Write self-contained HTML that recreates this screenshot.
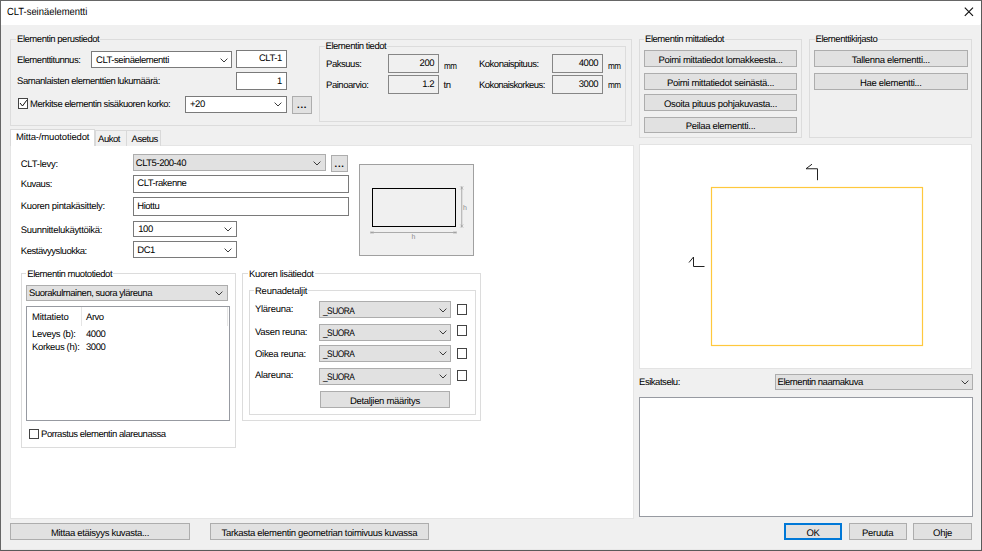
<!DOCTYPE html>
<html><head><meta charset="utf-8"><title>CLT-seinäelementti</title>
<style>
html,body{margin:0;padding:0;}
body{width:982px;height:551px;overflow:hidden;background:#f0f0f0;position:relative;font-family:"Liberation Sans",sans-serif;font-size:9.5px;letter-spacing:-0.46px;text-rendering:geometricPrecision;color:#000;}
.a{position:absolute;box-sizing:border-box;white-space:nowrap;}
.t{position:absolute;white-space:nowrap;line-height:10px;height:10px;transform:translateY(0.6px);}
.grp{position:absolute;box-sizing:border-box;border:1px solid #dcdcdc;}
.gl{position:absolute;white-space:nowrap;background:#f0f0f0;line-height:10px;height:10px;padding:0 1px;transform:translateY(0.6px);}
.w .gl{background:#fff;}
.btn{position:absolute;box-sizing:border-box;border:1px solid #adadad;background:#e1e1e1;text-align:center;white-space:nowrap;}
.ed{position:absolute;box-sizing:border-box;border:1px solid #7a7a7a;background:#fff;white-space:nowrap;}
.ro{background:#f0f0f0;border-color:#868686;}
.cb{position:absolute;box-sizing:border-box;border:1px solid #7a7a7a;background:#fff;white-space:nowrap;}
.cbg{border-color:#adadad;background:#e1e1e1;}
.cb svg,.cbg svg{position:absolute;right:3.5px;top:50%;margin-top:-2px;}
.chk{position:absolute;box-sizing:border-box;border:1px solid #444;background:#fff;width:10.5px;height:10.5px;}
.in{position:absolute;left:4px;top:calc(50% + var(--o,0px));margin-top:-5px;line-height:10px;transform:translateY(0.6px);}
.inr{position:absolute;right:3.7px;top:calc(50% + var(--o,0px));margin-top:-5px;line-height:10px;transform:translateY(0.6px);}
.btn span{position:absolute;left:0;right:0;top:calc(50% + var(--o,1.4px));margin-top:-5px;line-height:10px;transform:translateY(0.6px);letter-spacing:-0.31px;}
.mm{letter-spacing:-0.7px;font-size:9.3px;display:inline-block;transform:scaleX(0.87);transform-origin:0 50%;}
.su{letter-spacing:-0.6px;transform:translateY(1.6px) scaleX(0.88) !important;transform-origin:0 50%;}
.btn span.dots{letter-spacing:0.7px;padding-left:0.7px;font-weight:bold;}
</style></head><body>
<!-- window frame -->
<div class="a" style="left:0;top:0;width:982px;height:551px;border:1px solid #666;border-right-color:#5a5a5a;border-bottom-color:#5a5a5a;"></div>
<div class="a" style="left:1px;top:1px;width:980px;height:23.5px;background:#fff;"></div>
<div class="a" style="left:980px;top:24px;width:1px;height:526px;background:#f4f4f4;"></div>
<div class="a" style="left:1px;top:549px;width:980px;height:1px;background:#e8e8e8;"></div>
<div class="t" style="left:7.4px;top:6.8px;font-size:10.4px;letter-spacing:0;line-height:12px;height:12px;transform:scaleX(0.905);transform-origin:0 50%;">CLT-seinäelementti</div>
<svg class="a" style="left:964px;top:7px" width="10" height="10" viewBox="0 0 10 10"><path d="M0.800 0.600 L9 8.800 M9 0.600 L0.800 8.800" stroke="#111" stroke-width="1.15" fill="none"/></svg>

<!-- Group: Elementin perustiedot -->
<div class="grp" style="left:10.300px;top:38.800px;width:621.500px;height:87px;"></div>
<div class="gl" style="left:16px;top:34px;">Elementin perustiedot</div>
<div class="t" style="left:17px;top:54.500px;">Elementtitunnus:</div>
<div class="cb" style="left:91px;top:51px;width:141px;height:17px;"><span class="in">CLT-seinäelementti</span><svg width="8" height="5" viewBox="0 0 8 5"><path d="M0.600 0.600 L4 4 L7.400 0.600" stroke="#3c3c3c" fill="none" stroke-width="1"/></svg></div>
<div class="ed" style="left:235.500px;top:49.750px;width:51px;height:18px;"><span class="inr" style="--o:-0.5px">CLT-1</span></div>
<div class="t" style="left:17px;top:76px;">Samanlaisten elementtien lukumäärä:</div>
<div class="ed" style="left:235.500px;top:72.250px;width:51px;height:18px;"><span class="inr" style="--o:-0.7px">1</span></div>
<div class="chk" style="left:17.500px;top:98px;"><svg style="position:absolute;left:0;top:0" width="9" height="9" viewBox="0 0 9 9"><path d="M1 4 L3.500 7 L7.750 1.200" stroke="#111" fill="none" stroke-width="1"/></svg></div>
<div class="t" style="left:30px;top:98.750px;">Merkitse elementin sisäkuoren korko:</div>
<div class="cb" style="left:185px;top:95.750px;width:101.500px;height:17px;"><span class="in" style="--o:-0.5px">+20</span><svg width="8" height="5" viewBox="0 0 8 5"><path d="M0.600 0.600 L4 4 L7.400 0.600" stroke="#3c3c3c" fill="none" stroke-width="1"/></svg></div>
<div class="btn" style="left:291.750px;top:96px;width:20px;height:17.500px;"><span class="dots" style="--o:0.6px">...</span></div>

<!-- Group: Elementin tiedot -->
<div class="grp" style="left:319px;top:46px;width:306.500px;height:76.250px;"></div>
<div class="gl" style="left:324.500px;top:41.200px;">Elementin tiedot</div>
<div class="t" style="left:326px;top:59px;">Paksuus:</div>
<div class="ed ro" style="left:387.750px;top:54.250px;width:51px;height:18.500px;"><span class="inr" style="--o:-1px">200</span></div>
<div class="t" style="left:443.500px;top:60.400px;"><span class="mm">mm</span></div>
<div class="t" style="left:326px;top:79.750px;">Painoarvio:</div>
<div class="ed ro" style="left:387.750px;top:75.250px;width:51px;height:18.250px;"><span class="inr" style="--o:-0.700px">1.2</span></div>
<div class="t" style="left:443.500px;top:79.750px;">tn</div>
<div class="t" style="left:479px;top:59px;letter-spacing:-0.5px;">Kokonaispituus:</div>
<div class="ed ro" style="left:551.750px;top:54.250px;width:51px;height:18.500px;"><span class="inr" style="--o:-1px">4000</span></div>
<div class="t" style="left:607.500px;top:60.400px;"><span class="mm">mm</span></div>
<div class="t" style="left:479px;top:79.750px;letter-spacing:-0.58px;">Kokonaiskorkeus:</div>
<div class="ed ro" style="left:551.750px;top:75.250px;width:51px;height:18.250px;"><span class="inr" style="--o:-0.700px">3000</span></div>
<div class="t" style="left:607.500px;top:79.250px;"><span class="mm">mm</span></div>

<!-- Group: Elementin mittatiedot -->
<div class="grp" style="left:638.750px;top:38.800px;width:163.250px;height:99px;"></div>
<div class="gl" style="left:644px;top:34px;">Elementin mittatiedot</div>
<div class="btn" style="left:644px;top:50.250px;width:153px;height:16.750px;"><span>Poimi mittatiedot lomakkeesta...</span></div>
<div class="btn" style="left:644px;top:72.750px;width:153px;height:16.750px;"><span>Poimi mittatiedot seinästä...</span></div>
<div class="btn" style="left:644px;top:94.250px;width:153px;height:16.750px;"><span>Osoita pituus pohjakuvasta...</span></div>
<div class="btn" style="left:644px;top:116.500px;width:153px;height:16.750px;"><span>Peilaa elementti...</span></div>

<!-- Group: Elementtikirjasto -->
<div class="grp" style="left:809.250px;top:38.800px;width:162.750px;height:99px;"></div>
<div class="gl" style="left:814.500px;top:34.400px;">Elementtikirjasto</div>
<div class="btn" style="left:813.750px;top:50.250px;width:154px;height:16.750px;"><span>Tallenna elementti...</span></div>
<div class="btn" style="left:813.750px;top:72.750px;width:154px;height:16.750px;"><span>Hae elementti...</span></div>

<!-- Tabs -->
<div class="a" style="left:10px;top:144.750px;width:623.500px;height:374px;background:#fff;border:1px solid #e5e5e5;"></div>
<div class="a" style="left:94.500px;top:130px;width:32px;height:15.500px;background:#f0f0f0;border:1px solid #d9d9d9;border-bottom:none;"></div>
<div class="a" style="left:125.500px;top:130px;width:35.750px;height:15.500px;background:#f0f0f0;border:1px solid #d9d9d9;border-bottom:none;"></div>
<div class="a" style="left:10px;top:129px;width:85px;height:17px;background:#fff;border:1px solid #d9d9d9;border-bottom:none;"></div>
<div class="t" style="left:16px;top:132px;letter-spacing:-0.15px;">Mitta-/muototiedot</div>
<div class="t" style="left:98px;top:134px;">Aukot</div>
<div class="t" style="left:131.500px;top:134px;">Asetus</div>

<div class="w">
<div class="t" style="left:20.750px;top:159px;letter-spacing:-0.24px;">CLT-levy:</div>
<div class="cb cbg" style="left:133.250px;top:154px;width:192.250px;height:17px;"><span class="in" style="left:1.500px">CLT5-200-40</span><svg width="8" height="5" viewBox="0 0 8 5"><path d="M0.600 0.600 L4 4 L7.400 0.600" stroke="#3c3c3c" fill="none" stroke-width="1"/></svg></div>
<div class="btn" style="left:330.750px;top:155.250px;width:17px;height:16.500px;"><span class="dots" style="--o:0.6px">...</span></div>
<div class="t" style="left:20.750px;top:179px;">Kuvaus:</div>
<div class="ed" style="left:133.250px;top:175.250px;width:215.500px;height:18px;"><span class="in" style="left:3px;--o:-1.2px">CLT-rakenne</span></div>
<div class="t" style="left:20.750px;top:201px;letter-spacing:-0.31px;">Kuoren pintakäsittely:</div>
<div class="ed" style="left:133.250px;top:197.250px;width:215.500px;height:18.250px;"><span class="in" style="left:3px;--o:-0.8px">Hiottu</span></div>
<div class="t" style="left:20.750px;top:224.750px;letter-spacing:-0.3px;">Suunnittelukäyttöikä:</div>
<div class="cb" style="left:133.250px;top:220.500px;width:103.250px;height:16.750px;"><span class="in">100</span><svg width="8" height="5" viewBox="0 0 8 5"><path d="M0.600 0.600 L4 4 L7.400 0.600" stroke="#3c3c3c" fill="none" stroke-width="1"/></svg></div>
<div class="t" style="left:20.750px;top:246px;">Kestävyysluokka:</div>
<div class="cb" style="left:133.250px;top:241.250px;width:103.250px;height:16.750px;"><span class="in" style="left:3px">DC1</span><svg width="8" height="5" viewBox="0 0 8 5"><path d="M0.600 0.600 L4 4 L7.400 0.600" stroke="#3c3c3c" fill="none" stroke-width="1"/></svg></div>

<!-- picture -->
<div class="a" style="left:359px;top:164px;width:115px;height:92px;background:#f0f0f0;border:1px solid #a0a0a0;"></div>
<svg class="a" style="left:359px;top:164px" width="115" height="92" viewBox="0 0 115 92">
<rect x="13.500" y="24.500" width="83" height="38" fill="none" stroke="#000" stroke-width="1"/>
<path d="M102.750 22.250 V63.500 M11.250 68.500 H97.750" stroke="#999" stroke-width="0.8" fill="none"/>
<path d="M101.250 22.500 L104.250 25.500 M104.250 22.500 L101.250 25.500 M101.250 60.500 L104.250 63.500 M104.250 60.500 L101.250 63.500 M11.500 67 L14.500 70 M14.500 67 L11.500 70 M94.500 67 L97.500 70 M97.500 67 L94.500 70" stroke="#999" stroke-width="0.6" fill="none"/>
<text x="104" y="45.500" font-size="7" fill="#8a8a8a" letter-spacing="0" font-family="Liberation Sans, sans-serif">h</text>
<text x="52.500" y="75.200" font-size="7" fill="#8a8a8a" letter-spacing="0" font-family="Liberation Sans, sans-serif">h</text>
</svg>

<!-- Group: Elementin muototiedot -->
<div class="grp" style="left:20.750px;top:273.250px;width:215.500px;height:174.250px;"></div>
<div class="gl" style="left:26.250px;top:268.500px;">Elementin muototiedot</div>
<div class="cb cbg" style="left:26px;top:284.750px;width:201.750px;height:16.500px;"><span class="in" style="left:2px;--o:0.3px">Suorakulmainen, suora yläreuna</span><svg width="8" height="5" viewBox="0 0 8 5"><path d="M0.600 0.600 L4 4 L7.400 0.600" stroke="#3c3c3c" fill="none" stroke-width="1"/></svg></div>
<div class="ed" style="left:26px;top:305.500px;width:203.500px;height:115.500px;border-color:#979aa1;"></div>
<div class="a" style="left:81px;top:307px;width:1px;height:19px;background:#e5e5e5;"></div>
<div class="a" style="left:227px;top:307px;width:1px;height:19px;background:#e5e5e5;"></div>
<div class="t" style="left:32px;top:312px;letter-spacing:-0.2px;">Mittatieto</div>
<div class="t" style="left:86px;top:312px;">Arvo</div>
<div class="t" style="left:32px;top:329px;letter-spacing:-0.3px;">Leveys (b):</div>
<div class="t" style="left:86px;top:329px;">4000</div>
<div class="t" style="left:32px;top:342px;letter-spacing:-0.36px;">Korkeus (h):</div>
<div class="t" style="left:86px;top:342px;">3000</div>
<div class="chk" style="left:28.500px;top:428.500px;"></div>
<div class="t" style="left:41px;top:429.250px;">Porrastus elementin alareunassa</div>

<!-- Group: Kuoren lisätiedot -->
<div class="grp" style="left:242px;top:273.250px;width:239px;height:147.500px;"></div>
<div class="gl" style="left:248px;top:268.500px;letter-spacing:-0.36px;">Kuoren lisätiedot</div>
<div class="grp" style="left:248.750px;top:289.500px;width:227px;height:125.250px;"></div>
<div class="gl" style="left:254px;top:285.500px;letter-spacing:-0.25px;">Reunadetaljit</div>
<div class="t" style="left:255px;top:303.750px;letter-spacing:-0.3px;">Yläreuna:</div>
<div class="cb cbg" style="left:319px;top:301.250px;width:132px;height:17px;"><span class="in su" style="left:3px">_SUORA</span><svg width="8" height="5" viewBox="0 0 8 5"><path d="M0.600 0.600 L4 4 L7.400 0.600" stroke="#3c3c3c" fill="none" stroke-width="1"/></svg></div>
<div class="chk" style="left:456.750px;top:304px;"></div>
<div class="t" style="left:255px;top:327.250px;letter-spacing:-0.3px;">Vasen reuna:</div>
<div class="cb cbg" style="left:319px;top:323.500px;width:132px;height:17px;"><span class="in su" style="left:3px">_SUORA</span><svg width="8" height="5" viewBox="0 0 8 5"><path d="M0.600 0.600 L4 4 L7.400 0.600" stroke="#3c3c3c" fill="none" stroke-width="1"/></svg></div>
<div class="chk" style="left:456.750px;top:325px;"></div>
<div class="t" style="left:255px;top:349.250px;letter-spacing:-0.3px;">Oikea reuna:</div>
<div class="cb cbg" style="left:319px;top:344.750px;width:132px;height:16.750px;"><span class="in su" style="left:3px">_SUORA</span><svg width="8" height="5" viewBox="0 0 8 5"><path d="M0.600 0.600 L4 4 L7.400 0.600" stroke="#3c3c3c" fill="none" stroke-width="1"/></svg></div>
<div class="chk" style="left:456.750px;top:348px;"></div>
<div class="t" style="left:255px;top:370px;letter-spacing:-0.3px;">Alareuna:</div>
<div class="cb cbg" style="left:319px;top:367.750px;width:132px;height:16.750px;"><span class="in su" style="left:3px">_SUORA</span><svg width="8" height="5" viewBox="0 0 8 5"><path d="M0.600 0.600 L4 4 L7.400 0.600" stroke="#3c3c3c" fill="none" stroke-width="1"/></svg></div>
<div class="chk" style="left:456.750px;top:370px;"></div>
<div class="btn" style="left:319.750px;top:391px;width:130.250px;height:16.500px;"><span>Detaljien määritys</span></div>
</div>

<!-- Preview -->
<div class="a" style="left:639px;top:144px;width:333px;height:225px;background:#fff;border:1px solid #e3e3e3;"></div>
<svg class="a" style="left:639px;top:144px" width="333" height="225" viewBox="0 0 333 225">
<rect x="72.500" y="43.500" width="211" height="158" fill="none" stroke="#ffc83d" stroke-width="1.2"/>
<path d="M167 24.750 L173 20.200 M167 24.750 H178.500 V36.200" stroke="#222" stroke-width="1" fill="none"/>
<path d="M50 118.500 L54.500 113 M54.500 113 V122.500 H65.500" stroke="#222" stroke-width="1" fill="none"/>
</svg>
<div class="t" style="left:639px;top:377px;">Esikatselu:</div>
<div class="cb cbg" style="left:775px;top:373.500px;width:198px;height:16.500px;"><span class="in" style="left:1.500px;--o:0.3px">Elementin naamakuva</span><svg width="8" height="5" viewBox="0 0 8 5"><path d="M0.600 0.600 L4 4 L7.400 0.600" stroke="#3c3c3c" fill="none" stroke-width="1"/></svg></div>
<div class="ed" style="left:639px;top:397px;width:334px;height:120.250px;border-color:#979aa1;"></div>

<!-- Bottom buttons -->
<div class="btn" style="left:10px;top:523.250px;width:180px;height:16.250px;"><span>Mittaa etäisyys kuvasta...</span></div>
<div class="btn" style="left:210px;top:523.250px;width:218.750px;height:16.250px;"><span>Tarkasta elementin geometrian toimivuus kuvassa</span></div>
<div class="btn" style="left:784px;top:523px;width:58px;height:16.750px;border:1px solid #0078d7;box-shadow:inset 0 0 0 1px #0078d7;"><span>OK</span></div>
<div class="btn" style="left:848.500px;top:523.250px;width:58.250px;height:16.250px;"><span>Peruuta</span></div>
<div class="btn" style="left:913.250px;top:523.250px;width:58.500px;height:16.250px;"><span>Ohje</span></div>
</body></html>
